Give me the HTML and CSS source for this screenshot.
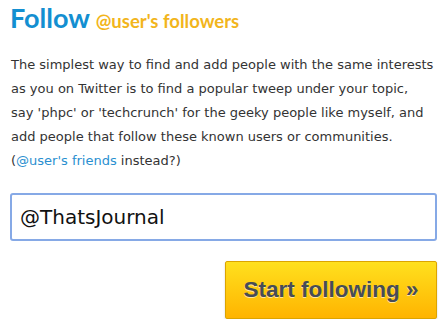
FILE: index.html
```html
<!DOCTYPE html>
<html>
<head>
<meta charset="utf-8">
<link rel="stylesheet" href="styles.css">
</head>
<body>
<div class="panel">
  <h1 class="title"><span class="title-main">Follow</span> <span class="title-sub">@user's followers</span></h1>
  <p class="intro">The simplest way to find and add people with the same interests<br>as you on Twitter is to find a popular tweep under your topic,<br>say 'phpc' or 'techcrunch' for the geeky people like myself, and<br>add people that follow these known users or communities.<br>(<a class="link" href="#">@user's friends</a> instead?)</p>
  <div class="field"><input class="handle" type="text" value="@ThatsJournal"></div>
  <div class="actions"><button class="start" type="button">Start following »</button></div>
</div>
</body>
</html>
```
FILE: styles.css
```css
html, body {
  margin: 0;
  padding: 0;
  background: #ffffff;
}
.panel {
  padding: 0 10px 0 10px;
  width: 427px;
}
.title {
  margin: 0;
  padding-top: 2px;
  height: 34px;
  font-family: "Lato", "Open Sans", sans-serif;
  font-weight: 700;
  line-height: 28px;
  white-space: nowrap;
}
.title-main {
  font-size: 27px;
  color: #138fd1;
}
.title-sub {
  font-size: 18.5px;
  color: #f2b51c;
  margin-left: -2px;
}
.intro {
  margin: 17px 0 0 1px;
  font-family: "DejaVu Sans", Verdana, sans-serif;
  font-size: 13px;
  line-height: 24px;
  color: #333333;
  white-space: nowrap;
}
.link {
  color: #2a8fd0;
  text-decoration: none;
}
.field {
  margin-top: 20px;
}
.handle {
  box-sizing: border-box;
  width: 427px;
  height: 48px;
  margin: 0;
  border: 2px solid #86a9e6;
  border-radius: 3px;
  padding: 0 8px;
  font-family: "DejaVu Sans", Verdana, sans-serif;
  font-size: 20px;
  color: #111111;
  outline: none;
}
.actions {
  display: flex;
  justify-content: flex-end;
  margin-top: 20px;
}
.start {
  box-sizing: border-box;
  width: 212px;
  height: 58px;
  border: 1px solid #dca400;
  border-radius: 2px;
  background: linear-gradient(#ffe01e, #ffb400);
  box-shadow: 0 1px 2px rgba(0,0,0,0.2);
  font-family: "Liberation Sans", Arial, sans-serif;
  font-weight: 700;
  font-size: 22.5px;
  color: #474c57;
  text-shadow: 0 1px 0 rgba(255,255,255,0.6);
  padding: 0;
  cursor: pointer;
}
```
